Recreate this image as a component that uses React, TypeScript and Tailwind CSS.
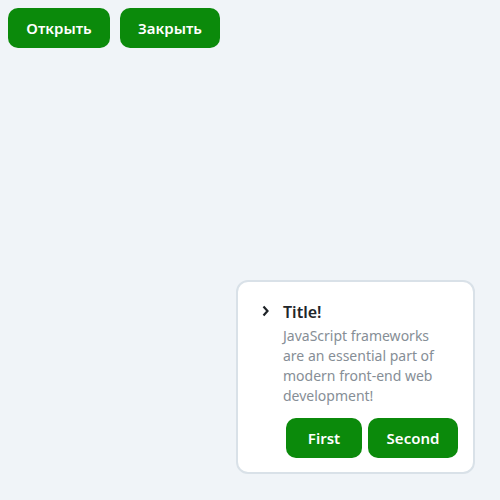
import React from 'react';

export default function App() {
  const font = { fontFamily: '"Noto Sans", "Open Sans", sans-serif' };
  const btn = 'h-10 rounded-[10px] bg-[#0b8a0b] text-white text-[15px] font-semibold';

  return (
    <div className="w-[500px] h-[500px] bg-[#f0f4f8] relative" style={font}>
      {/* Top buttons */}
      <div className="flex gap-[10px] p-2">
        <button className={btn + ' w-[102px]'}>Открыть</button>
        <button className={btn + ' w-[100px]'}>Закрыть</button>
      </div>

      {/* Toast */}
      <div className="absolute right-[25px] bottom-[26px] w-[239px] bg-white border-2 border-[#d9e1e8] rounded-[12px] pt-[18px] pr-[15px] pb-[14px] pl-[22px]">
        <div className="flex gap-[11px]">
          <svg width="12" height="12" viewBox="0 0 12 12" className="mt-[5px] shrink-0">
            <path d="M3.5 1.5 L7.5 6 L3.5 10.5" fill="none" stroke="#1f2328" strokeWidth="2.2" />
          </svg>
          <div className="flex-1">
            <div className="text-[16px] font-semibold text-[#22262a] leading-[24px]">Title!</div>
            <p className="mt-[2px] text-[14px] leading-[20px] text-[#868e96] w-[162px]">
              JavaScript frameworks are an essential part of modern front-end web development!
            </p>
          </div>
        </div>
        <div className="flex justify-end gap-[6px] mt-[12px]">
          <button className={btn + ' w-[76px]'}>First</button>
          <button className={btn + ' w-[90px]'}>Second</button>
        </div>
      </div>
    </div>
  );
}
